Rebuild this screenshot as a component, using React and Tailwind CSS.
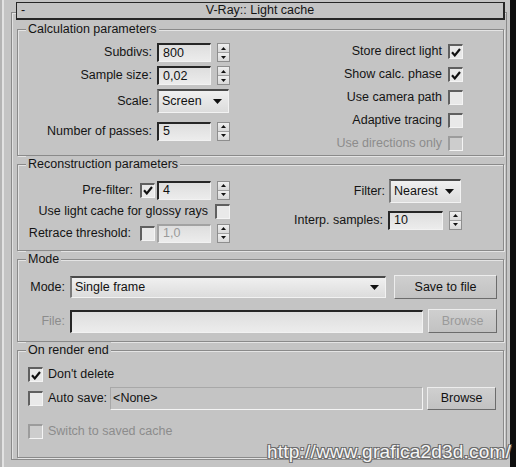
import React from "react";

const Spinner = () => (
  <div className="ml-[6px] flex h-[19px] w-[13px] flex-col border border-[#8e8e8e] bg-[#dcdcdc]">
    <div className="flex flex-1 items-center justify-center border-b border-[#a0a0a0] bg-gradient-to-b from-[#efefef] to-[#d8d8d8]">
      <svg width="5" height="3" viewBox="0 0 5 3">
        <path d="M0 3 L2.5 0 L5 3 Z" fill="#111" />
      </svg>
    </div>
    <div className="flex flex-1 items-center justify-center bg-gradient-to-b from-[#efefef] to-[#d8d8d8]">
      <svg width="5" height="3" viewBox="0 0 5 3">
        <path d="M0 0 L2.5 3 L5 0 Z" fill="#111" />
      </svg>
    </div>
  </div>
);

const Field = ({ w, value, disabled, h = "h-[19px]" }) => (
  <div
    className={`flex ${h} ${w} items-center border-t-2 border-l-2 border-r border-b border-r-[#f2f2f2] border-b-[#f2f2f2] bg-gradient-to-b from-[#dedede] to-[#ececec] pl-[4px] leading-none ${
      disabled
        ? "border-t-[#a2a2a2] border-l-[#a2a2a2] text-[#9a9a9a]"
        : "border-t-[#262626] border-l-[#262626] text-[#111]"
    }`}
  >
    {value}
  </div>
);

const Check = ({ checked, disabled }) => (
  <div
    className={`flex h-[15px] w-[15px] shrink-0 items-center justify-center border-t-2 border-l-2 border-r border-b border-r-[#f4f4f4] border-b-[#f4f4f4] ${
      disabled
        ? "border-t-[#9c9c9c] border-l-[#9c9c9c] bg-[#cdcdcd]"
        : "border-t-[#606060] border-l-[#606060] bg-[#e9e9e9]"
    }`}
  >
    {checked && (
      <svg width="10" height="9" viewBox="0 0 10 9">
        <path d="M1 4.2 L3.8 7.4 L9 1" stroke="#111" strokeWidth="2.2" fill="none" />
      </svg>
    )}
  </div>
);

const Arrow = () => (
  <svg width="9" height="5" viewBox="0 0 9 5">
    <path d="M0 0 L9 0 L4.5 5 Z" fill="#111" />
  </svg>
);

const Select = ({ w, h, value }) => (
  <div
    className={`flex ${w} ${h} items-center justify-between border-t-2 border-l-2 border-t-[#4a4a4a] border-l-[#7a7a7a] border-r border-b border-r-[#f2f2f2] border-b-[#f2f2f2] bg-gradient-to-b from-[#f0f0f0] to-[#dcdcdc] pl-[3px] pr-[6px] leading-none text-[#111]`}
  >
    <span>{value}</span>
    <Arrow />
  </div>
);

const Btn = ({ w, h, children, disabled }) => (
  <div
    className={`flex ${w} ${h} items-center justify-center border border-t-[#ededed] border-l-[#ededed] border-b-[#6c6c6c] border-r-[#6c6c6c] bg-gradient-to-b from-[#cfcfcf] to-[#c2c2c2] leading-none ${
      disabled ? "text-[#9a9a9a]" : "text-[#111]"
    }`}
  >
    {children}
  </div>
);

const Group = ({ title, mt, h, children }) => (
  <div
    className={`${mt} ${h} w-[487px] border border-[#8a8a8a] shadow-[inset_1px_1px_0_#e4e4e4,1px_1px_0_#e4e4e4]`}
  >
    <div className="-mt-[9px] ml-[8px] w-fit bg-[#c4c4c4] px-[2px] leading-[16px] text-[#141414]">
      {title}
    </div>
    {children}
  </div>
);

const Row = ({ cls, children }) => (
  <div className={`flex items-center justify-end ${cls}`}>{children}</div>
);

export default function App() {
  return (
    <div className="relative flex h-[467px] w-[516px] overflow-hidden bg-[#c4c4c4] font-['Liberation_Sans',Arial,sans-serif] text-[12.5px] text-[#141414]">
      <div className="w-[2px] bg-[#b4b4b4]" />
      <div className="w-[2px] bg-[#e2e2e2]" />

      <div className="flex w-[506px] flex-col pt-[2px]">
        {/* rollout title */}
        <div className="relative z-10 ml-[12px] flex h-[18px] w-[489px] items-center border border-b-2 border-r-2 border-[#262626] bg-[#c4c4c4] leading-none">
          <span className="w-[20px] pl-[4px]">-</span>
          <span className="flex-1 text-center">V-Ray:: Light cache</span>
          <span className="w-[20px]" />
        </div>

        {/* rollout frame */}
        <div className="-mt-[8px] ml-[7px] flex h-[448px] w-[496px] flex-col border border-[#8a8a8a] pl-[5px] shadow-[inset_1px_1px_0_#e2e2e2]">
          {/* Calculation parameters */}
          <Group title="Calculation parameters" mt="mt-[16px]" h="h-[127px]">
            <div className="flex">
              <div className="flex w-[212px] flex-col">
                <Row cls="mt-[4px] h-[23px]">
                  <span>Subdivs:</span>
                  <div className="ml-[5px]">
                    <Field w="w-[54px]" value="800" />
                  </div>
                  <Spinner />
                </Row>
                <Row cls="h-[23px]">
                  <span>Sample size:</span>
                  <div className="ml-[5px]">
                    <Field w="w-[54px]" value="0,02" />
                  </div>
                  <Spinner />
                </Row>
                <Row cls="mt-[2px] h-[24px] pr-[1px]">
                  <span>Scale:</span>
                  <div className="ml-[5px]">
                    <Select w="w-[72px]" h="h-[24px]" value="Screen" />
                  </div>
                </Row>
                <Row cls="mt-[8px] h-[20px]">
                  <span>Number of passes:</span>
                  <div className="ml-[5px]">
                    <Field w="w-[54px]" value="5" />
                  </div>
                  <Spinner />
                </Row>
              </div>
              <div className="flex flex-1 flex-col pt-[3px] pr-[40px]">
                {[
                  ["Store direct light", true, false],
                  ["Show calc. phase", true, false],
                  ["Use camera path", false, false],
                  ["Adaptive tracing", false, false],
                  ["Use directions only", false, true],
                ].map(([label, checked, disabled]) => (
                  <Row key={label} cls="h-[23px]">
                    <span className={disabled ? "text-[#8c8c8c]" : ""}>{label}</span>
                    <div className="ml-[6px]">
                      <Check checked={checked} disabled={disabled} />
                    </div>
                  </Row>
                ))}
              </div>
            </div>
          </Group>

          {/* Reconstruction parameters */}
          <Group title="Reconstruction parameters" mt="mt-[8px]" h="h-[87px]">
            <div className="flex">
              <div className="flex w-[212px] flex-col">
                <Row cls="mt-[7px] h-[22px]">
                  <span>Pre-filter:</span>
                  <div className="ml-[7px]">
                    <Check checked />
                  </div>
                  <div className="ml-[2px]">
                    <Field w="w-[54px]" value="4" />
                  </div>
                  <Spinner />
                </Row>
                <Row cls="h-[21px]">
                  <span>Use light cache for glossy rays</span>
                  <div className="ml-[7px]">
                    <Check />
                  </div>
                </Row>
                <Row cls="h-[22px]">
                  <span>Retrace threshold:</span>
                  <div className="ml-[9px]">
                    <Check />
                  </div>
                  <div className="ml-[2px]">
                    <Field w="w-[54px]" value="1,0" disabled />
                  </div>
                  <Spinner />
                </Row>
              </div>
              <div className="flex flex-1 flex-col pr-[41px]">
                <Row cls="mt-[7px] h-[24px] pr-[1px]">
                  <span>Filter:</span>
                  <div className="ml-[4px]">
                    <Select w="w-[72px]" h="h-[24px]" value="Nearest" />
                  </div>
                </Row>
                <Row cls="mt-[7px] h-[20px]">
                  <span>Interp. samples:</span>
                  <div className="ml-[5px]">
                    <Field w="w-[55px]" value="10" />
                  </div>
                  <Spinner />
                </Row>
              </div>
            </div>
          </Group>

          {/* Mode */}
          <Group title="Mode" mt="mt-[8px]" h="h-[83px]">
            <div className="flex flex-col pl-[6px]">
              <div className="mt-[8px] flex h-[24px] items-center">
                <span className="w-[41px] text-right">Mode:</span>
                <div className="ml-[5px]">
                  <Select w="w-[316px]" h="h-[22px]" value="Single frame" />
                </div>
                <div className="ml-[8px]">
                  <Btn w="w-[103px]" h="h-[24px]">Save to file</Btn>
                </div>
              </div>
              <div className="mt-[10px] flex h-[24px] items-center">
                <span className="w-[41px] text-right text-[#8c8c8c]">File:</span>
                <div className="ml-[5px]">
                  <Field w="w-[353px]" h="h-[23px]" value="" />
                </div>
                <div className="ml-[5px]">
                  <Btn w="w-[69px]" h="h-[24px]" disabled>
                    Browse
                  </Btn>
                </div>
              </div>
            </div>
          </Group>

          {/* On render end */}
          <Group title="On render end" mt="mt-[8px]" h="h-[108px]">
            <div className="flex flex-col pl-[10px]">
              <div className="mt-[5px] flex h-[23px] items-center">
                <Check checked />
                <span className="ml-[5px]">Don't delete</span>
              </div>
              <div className="flex h-[24px] items-center">
                <Check />
                <span className="ml-[5px]">Auto save:</span>
                <div className="ml-[3px] flex h-[23px] w-[313px] items-center border border-t-[#a8a8a8] border-l-[#a8a8a8] border-b-[#f4f4f4] border-r-[#f4f4f4] pl-[2px] leading-none">
                  &lt;None&gt;
                </div>
                <div className="ml-[4px]">
                  <Btn w="w-[69px]" h="h-[23px]">Browse</Btn>
                </div>
              </div>
              <div className="mt-[10px] flex h-[22px] items-center">
                <Check disabled />
                <span className="ml-[5px] text-[#8c8c8c]">Switch to saved cache</span>
              </div>
            </div>
          </Group>
        </div>
      </div>

      <div className="w-[6px] bg-[#0e0e0e]" />

      {/* watermark */}
      <div className="absolute left-[267px] top-[440px] text-[19px] leading-[24px] tracking-[0.2px] text-[#f6f6f6] [text-shadow:1px_1px_0_#6a6a6a,-1px_-1px_0_#6a6a6a,1px_-1px_0_#6a6a6a,-1px_1px_0_#6a6a6a]">
        http://www.grafica2d3d.com/
      </div>
    </div>
  );
}
